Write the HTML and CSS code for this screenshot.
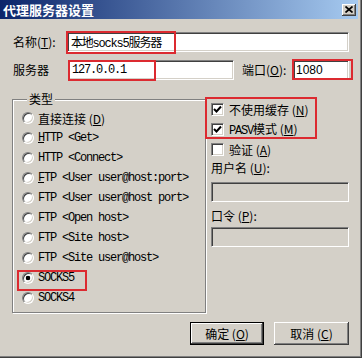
FILE: index.html
```html
<!DOCTYPE html>
<html lang="zh-CN">
<head>
    <meta charset="UTF-8">
    <title>代理服务器设置</title>
    <link rel="stylesheet" href="styles.css">
</head>
<body>
    <div class="window">
        <div class="titlebar">
            <span class="title">代理服务器设置</span>
            <span class="close">
                <svg width="8" height="7" viewBox="0 0 8 7"><path d="M0.5 0.5 L7.5 6.5 M7.5 0.5 L0.5 6.5" stroke="#000" stroke-width="1.7"/></svg>
            </span>
        </div>

        <div class="content">
            <div class="row">
                <label class="lbl lbl-name">名称(<u>T</u>):</label>
                <input class="field field-name mono" value="本地socks5服务器">
            </div>
            <div class="row row-server">
                <label class="lbl lbl-server">服务器</label>
                <input class="field field-server mono" value="127.0.0.1">
                <label class="lbl lbl-port">端口(<u>O</u>):</label>
                <input class="field field-port" value="1080">
            </div>

            <div class="main">
                <fieldset class="group">
                    <legend>类型</legend>
                    <div class="opt"><span class="radio"></span><span>直接连接 (<u>D</u>)</span></div>
                    <div class="opt"><span class="radio"></span><span class="mono"><u>H</u>TTP &lt;Get&gt;</span></div>
                    <div class="opt"><span class="radio"></span><span class="mono">HTTP &lt;Connect&gt;</span></div>
                    <div class="opt"><span class="radio"></span><span class="mono"><u>F</u>TP &lt;User user@host:port&gt;</span></div>
                    <div class="opt"><span class="radio"></span><span class="mono">FTP &lt;User user@host port&gt;</span></div>
                    <div class="opt"><span class="radio"></span><span class="mono">FTP &lt;Open host&gt;</span></div>
                    <div class="opt"><span class="radio"></span><span class="mono">FTP &lt;Site host&gt;</span></div>
                    <div class="opt"><span class="radio"></span><span class="mono">FTP &lt;Site user@host&gt;</span></div>
                    <div class="opt"><span class="radio on"></span><span class="mono">SOCKS5</span></div>
                    <div class="opt"><span class="radio"></span><span class="mono">SOCKS4</span></div>
                </fieldset>

                <div class="side">
                    <div class="opt">
                        <span class="check"><svg width="9" height="9" viewBox="0 0 9 9"><path d="M1 4 L3.5 6.5 L8 1.5" fill="none" stroke="#000" stroke-width="2"/></svg></span>
                        <span>不使用缓存 (<u>N</u>)</span>
                    </div>
                    <div class="opt">
                        <span class="check"><svg width="9" height="9" viewBox="0 0 9 9"><path d="M1 4 L3.5 6.5 L8 1.5" fill="none" stroke="#000" stroke-width="2"/></svg></span>
                        <span><span class="mono">PASV</span>模式 (<u>M</u>)</span>
                    </div>
                    <div class="opt">
                        <span class="check"></span>
                        <span>验证 (<u>A</u>)</span>
                    </div>
                    <div class="sub-label">用户名 (<u>U</u>):</div>
                    <input class="field field-off field-user" disabled>
                    <div class="sub-label sub-pass">口令 (<u>P</u>):</div>
                    <input class="field field-off field-pass" disabled>
                </div>
            </div>

            <div class="buttons">
                <button class="btn btn-default">确定 (<u>O</u>)</button>
                <button class="btn">取消 (<u>C</u>)</button>
            </div>
        </div>

        <!-- red annotation boxes drawn over the dialog -->
        <div class="mark mark-name"></div>
        <div class="mark mark-server"></div>
        <div class="mark mark-port"></div>
        <div class="mark mark-cache"></div>
        <div class="mark mark-socks"></div>
    </div>
</body>
</html>
```

FILE: styles.css
```css
:root {
    --face: #d4d0c8;
    --shadow: #808080;
    --dark: #404040;
    --light: #ffffff;
    --mark: #dc2a30;
}

* {
    margin: 0;
    padding: 0;
    box-sizing: border-box;
}

body {
    background: var(--face);
}

.window {
    position: relative;
    width: 362px;
    height: 358px;
    padding-right: 4px;
    background: var(--face);
    box-shadow: inset -1px -1px 0 var(--dark), inset -2px -2px 0 var(--shadow);
    font: 12px "Noto Sans CJK SC", sans-serif;
    color: #000;
}

.titlebar {
    display: flex;
    justify-content: space-between;
    align-items: center;
    height: 19px;
    padding: 0 2px 0 3px;
    background: linear-gradient(to right, #0a246a, #a6caf0);
}

.title {
    color: #fff;
    font-weight: bold;
    font-size: 13px;
    line-height: 19px;
}

.close {
    display: flex;
    justify-content: center;
    align-items: center;
    width: 14px;
    height: 12px;
    background: var(--face);
    box-shadow: inset -1px -1px 0 var(--dark), inset 1px 1px 0 var(--light), inset -2px -2px 0 var(--shadow);
}

.content {
    padding: 13px 9px 0 12px;
}

.mono {
    font-family: "Liberation Mono", "Noto Sans CJK SC", monospace;
    font-size: 12px;
    letter-spacing: -1.2px;
}

.row {
    display: flex;
    align-items: center;
    height: 20px;
}

.row-server {
    margin-top: 8px;
}

.lbl {
    line-height: 20px;
    white-space: nowrap;
}

.lbl-name {
    width: 55px;
    padding-left: 1px;
}

.lbl-server {
    width: 56px;
    padding-left: 1px;
}

.lbl-port {
    width: 51px;
    margin-left: 8px;
}

.field {
    height: 20px;
    padding: 0 3px;
    border: 1px solid;
    border-color: var(--shadow) var(--light) var(--light) var(--shadow);
    box-shadow: inset 1px 1px 0 var(--dark), inset -1px -1px 0 var(--face);
    background: #fff;
    font: inherit;
    color: #000;
    outline: none;
}

.field.mono {
    font-family: "Liberation Mono", "Noto Sans CJK SC", monospace;
    font-size: 12px;
    letter-spacing: -1.2px;
}

.field-name {
    flex: 1;
    min-width: 0;
}

.field-server {
    width: 166px;
}

.field-port {
    flex: 1;
    min-width: 0;
    padding-left: 2px;
    font-family: "Liberation Sans", sans-serif;
}

.main {
    display: flex;
    align-items: flex-start;
    margin-top: 12px;
}

.group {
    width: 194px;
    padding: 2px 0 4px 9px;
    border: 1px solid var(--shadow);
    box-shadow: inset 1px 1px 0 var(--light), 1px 1px 0 var(--light);
}

.group legend {
    margin-left: 5px;
    padding: 0 2px;
    line-height: 14px;
    background: var(--face);
}

.opt {
    display: flex;
    align-items: center;
    gap: 4px;
    height: 20px;
    white-space: nowrap;
}

.radio {
    flex: none;
    width: 12px;
    height: 12px;
    border-radius: 50%;
    border: 1px solid;
    border-color: var(--shadow) var(--light) var(--light) var(--shadow);
    box-shadow: inset 1px 1px 0 var(--dark), inset -1px -1px 0 var(--face);
    background: #fff;
}

.radio.on {
    background: radial-gradient(circle, #000 0 2px, #fff 2.6px);
}

.side {
    display: flex;
    flex-direction: column;
    width: 138px;
    margin-left: 5px;
    margin-top: 7px;
}

.side .opt {
    gap: 5px;
}

.check {
    flex: none;
    display: flex;
    justify-content: center;
    align-items: center;
    width: 13px;
    height: 13px;
    border: 1px solid;
    border-color: var(--shadow) var(--light) var(--light) var(--shadow);
    box-shadow: inset 1px 1px 0 var(--dark), inset -1px -1px 0 var(--face);
    background: #fff;
}

.sub-label {
    height: 18px;
    line-height: 18px;
}

.sub-pass {
    margin-top: 5px;
}

.field-off {
    background: var(--face);
}

.field-user {
    margin-top: 5px;
}

.field-pass {
    margin-top: 2px;
}

.buttons {
    display: flex;
    justify-content: flex-end;
    gap: 10px;
    margin-top: 9px;
}

.btn {
    width: 75px;
    height: 23px;
    border: none;
    background: var(--face);
    box-shadow: inset -1px -1px 0 var(--dark), inset 1px 1px 0 var(--light), inset -2px -2px 0 var(--shadow);
    font: inherit;
    color: #000;
}

.btn-default {
    width: 74px;
    border: 1px solid #000;
}

.mark {
    position: absolute;
    border: 2px solid var(--mark);
}

.mark-name {
    left: 66px;
    top: 31px;
    width: 110px;
    height: 23px;
}

.mark-server {
    left: 68px;
    top: 60px;
    width: 88px;
    height: 21px;
}

.mark-port {
    left: 292px;
    top: 59px;
    width: 61px;
    height: 21px;
}

.mark-cache {
    left: 205px;
    top: 97px;
    width: 112px;
    height: 42px;
}

.mark-socks {
    left: 17px;
    top: 270px;
    width: 70px;
    height: 21px;
}
```
